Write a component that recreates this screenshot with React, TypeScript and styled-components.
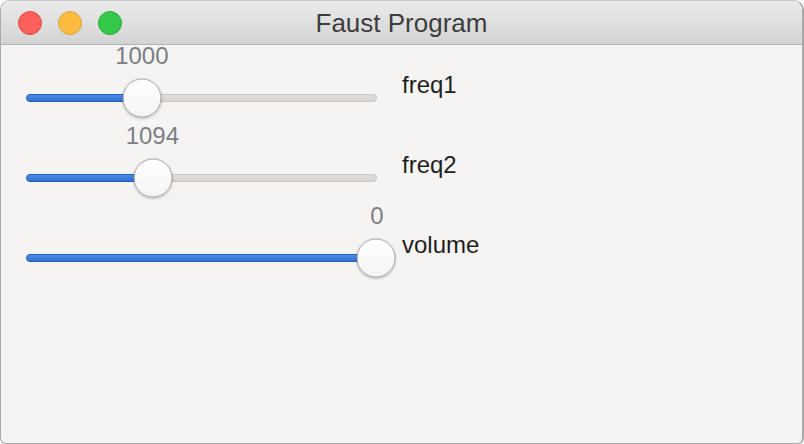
import React from "react";
import styled, { createGlobalStyle } from "styled-components";

const GlobalStyle = createGlobalStyle`
  html, body { margin: 0; padding: 0; background: #ffffff; }
  body { font-family: "Liberation Sans", Arial, sans-serif; }
`;

const Window = styled.div`
  width: 804px;
  height: 444px;
  box-sizing: border-box;
  border: 1px solid #a9a9a9;
  border-top-color: #c4c4c4;
  border-right-width: 2px;
  border-radius: 10px 10px 6px 6px;
  overflow: hidden;
  background: #f5f4f2;
  display: flex;
  flex-direction: column;
`;

const TitleBar = styled.div`
  height: 43px;
  flex: 0 0 auto;
  border-bottom: 1px solid #b4b4b4;
  background: linear-gradient(#ebebeb, #d3d3d3);
  display: grid;
  grid-template-columns: 1fr auto 1fr;
  align-items: center;
`;

const Lights = styled.div`
  display: flex;
  gap: 16px;
  padding-left: 17px;
  align-items: center;
`;

const Light = styled.span<{ $fill: string; $edge: string }>`
  width: 24px;
  height: 24px;
  box-sizing: border-box;
  border-radius: 50%;
  background: ${(p) => p.$fill};
  border: 1px solid ${(p) => p.$edge};
`;

const Title = styled.div`
  font-size: 26px;
  line-height: 30px;
  color: #3d3d3d;
  padding-top: 1px;
`;

const Body = styled.div`
  flex: 1;
  padding-top: 1px;
  display: flex;
  flex-direction: column;
`;

const Row = styled.div`
  height: 80px;
  display: flex;
  align-items: flex-start;
`;

const SliderCol = styled.div`
  margin-left: 25px;
  width: 351px;
  display: flex;
  flex-direction: column;
`;

const ValueLine = styled.div`
  position: relative;
  height: 20px;
`;

const ValueText = styled.span`
  position: absolute;
  top: 0;
  transform: translateX(-50%);
  font-size: 24px;
  line-height: 20px;
  color: #7b8086;
  white-space: nowrap;
`;

const Track = styled.div`
  position: relative;
  margin-top: 28px;
  height: 8px;
  box-sizing: border-box;
  border-radius: 4px;
  background: linear-gradient(#e1dedb, #d8d5d2);
  border: 1px solid #c9c6c3;
`;

const Fill = styled.div`
  position: absolute;
  left: -1px;
  top: -1px;
  bottom: -1px;
  box-sizing: border-box;
  border-radius: 4px;
  background: linear-gradient(#4b8be6, #2f71d6);
  border: 1px solid #2862bd;
`;

const Thumb = styled.div`
  position: absolute;
  top: 50%;
  width: 39px;
  height: 39px;
  box-sizing: border-box;
  border-radius: 50%;
  transform: translate(-50%, -50%);
  background: linear-gradient(#ffffff, #f5f5f5);
  border: 1px solid #aca7a3;
  box-shadow: 0 1px 3px rgba(0, 0, 0, 0.28);
`;

const Label = styled.div`
  margin-left: 25px;
  margin-top: 25px;
  font-size: 24px;
  line-height: 28px;
  color: #1f1f1f;
`;

type SliderProps = { value: string; pct: number; label: string };

function SliderRow({ value, pct, label }: SliderProps) {
  const pos = `${pct * 100}%`;
  return (
    <Row>
      <SliderCol>
        <ValueLine>
          <ValueText style={{ left: pos }}>{value}</ValueText>
        </ValueLine>
        <Track>
          <Fill style={{ width: `calc(${pos} + 2px)` }} />
          <Thumb style={{ left: pos }} />
        </Track>
      </SliderCol>
      <Label>{label}</Label>
    </Row>
  );
}

export default function App() {
  return (
    <>
      <GlobalStyle />
      <Window>
        <TitleBar>
          <Lights>
            <Light $fill="#fc605b" $edge="#de4b46" />
            <Light $fill="#fdbc40" $edge="#dea23a" />
            <Light $fill="#34c84a" $edge="#28a93a" />
          </Lights>
          <Title>Faust Program</Title>
          <div />
        </TitleBar>
        <Body>
          <SliderRow value="1000" pct={0.33} label="freq1" />
          <SliderRow value="1094" pct={0.36} label="freq2" />
          <SliderRow value="0" pct={1} label="volume" />
        </Body>
      </Window>
    </>
  );
}
